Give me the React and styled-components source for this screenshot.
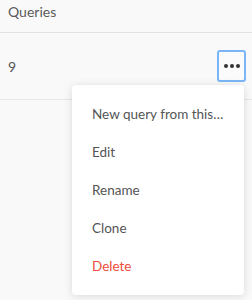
import React from "react";
import styled, { createGlobalStyle } from "styled-components";

const GlobalStyle = createGlobalStyle`
    body {
        margin: 0;
        background-color: #f9f9f9;
        font-family: 'Lato', 'Liberation Sans', sans-serif;
    }
`

const items = [
    { label: "New query from this\u2026" },
    { label: "Edit" },
    { label: "Rename" },
    { label: "Clone" },
    { label: "Delete", danger: true },
]

export default function App() {
    return (
        <Main>
            <GlobalStyle />
            <Header>Queries</Header>
            <Row>
                <Count>9</Count>
                <MenuAnchor>
                    <DotsButton aria-label="More">
                        <Dot /><Dot /><Dot />
                    </DotsButton>
                    <Menu>
                        {items.map((item) => (
                            <MenuItem key={item.label} $danger={item.danger}>
                                {item.label}
                            </MenuItem>
                        ))}
                    </Menu>
                </MenuAnchor>
            </Row>
        </Main>
    )
}

const Main = styled.div`
    width: 252px;
    height: 300px;
    overflow: hidden;
    display: flex;
    flex-direction: column;
`

const Header = styled.div`
    height: 33px;
    box-sizing: border-box;
    padding: 3px 8px 0;
    border-bottom: 1px solid #e2e2e2;
    font-size: 14px;
    line-height: 17px;
    color: #5a5a5a;
`

const Row = styled.div`
    height: 67px;
    box-sizing: border-box;
    padding: 0 6px 0 8px;
    display: flex;
    align-items: center;
    justify-content: space-between;
    border-bottom: 1px solid #e6e6e6;
`

const Count = styled.span`
    font-size: 14px;
    color: #555555;
`

const MenuAnchor = styled.div`
    position: relative;
`

const DotsButton = styled.button`
    width: 29px;
    height: 32px;
    box-sizing: border-box;
    padding: 0;
    border: 2px solid #7ab6f7;
    border-radius: 3px;
    background: #fbfbfb;
    display: flex;
    align-items: center;
    justify-content: center;
    gap: 2px;
`

const Dot = styled.span`
    width: 4px;
    height: 4px;
    border-radius: 50%;
    background: #333333;
`

const Menu = styled.div`
    position: absolute;
    top: calc(100% + 3px);
    right: 2px;
    width: 172px;
    height: 210px;
    box-sizing: border-box;
    padding: 10px 0;
    background: #ffffff;
    border-radius: 4px;
    box-shadow: 0 1px 8px rgba(0, 0, 0, 0.13);
    display: flex;
    flex-direction: column;
`

const MenuItem = styled.div`
    height: 38px;
    padding-left: 20px;
    display: flex;
    align-items: center;
    font-size: 13.5px;
    color: ${(p) => (p.$danger ? "#ec4b3a" : "#555555")};
    white-space: nowrap;
`
